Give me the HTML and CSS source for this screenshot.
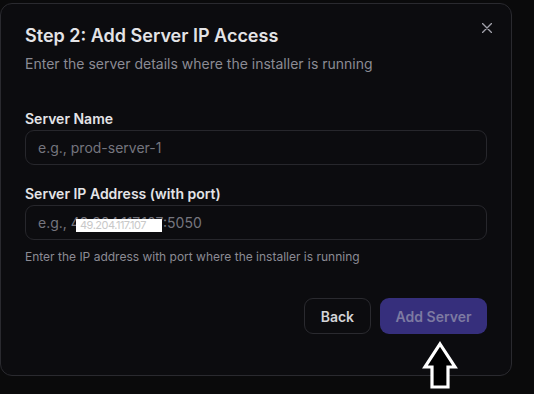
FILE: index.html
```html
<!DOCTYPE html>
<html lang="en">
<head>
  <meta charset="UTF-8" />
  <meta name="viewport" content="width=device-width, initial-scale=1.0" />
  <title>Add Server IP Access</title>
  <link rel="stylesheet" href="styles.css">
</head>
<body>

  <div class="dialog">
    <button class="close-btn" aria-label="Close">
      <svg width="10" height="10" viewBox="0 0 10 10" fill="none" stroke="currentColor" stroke-width="1.4" stroke-linecap="round">
        <path d="M0.5 0.5 9.5 9.5 M9.5 0.5 0.5 9.5" />
      </svg>
    </button>

    <h2>Step 2: Add Server IP Access</h2>
    <p class="subtitle">Enter the server details where the installer is running</p>

    <form class="server-form">
      <div class="field">
        <label for="serverName">Server Name</label>
        <input type="text" id="serverName" placeholder="e.g., prod-server-1" />
      </div>

      <div class="field">
        <label for="serverIp">Server IP Address (with port)</label>
        <div class="input-wrap">
          <input type="text" id="serverIp" placeholder="e.g., 49.204.117.107:5050" />
          <span class="redacted">49.204.117.107</span>
        </div>
        <p class="hint">Enter the IP address with port where the installer is running</p>
      </div>

      <div class="actions">
        <button type="button" class="btn btn-outline">Back</button>
        <button type="submit" class="btn btn-primary" disabled>Add Server</button>
      </div>
    </form>
  </div>

  <svg class="pointer-arrow" width="36" height="50" viewBox="0 0 36 50">
    <polygon points="18,3 33,26 26,26 26,46 10,46 10,26 3,26" fill="#000" stroke="#fff" stroke-width="3.2" stroke-linejoin="miter" />
  </svg>

</body>
</html>
```

FILE: styles.css
```css
* {
  box-sizing: border-box;
  margin: 0;
  padding: 0;
  font-family: Inter, 'Liberation Sans', Arial, sans-serif;
}

body {
  width: 534px;
  height: 394px;
  background: #0a0a0b;
  position: relative;
  overflow: hidden;
}

.dialog {
  position: relative;
  margin-top: 3px;
  width: 512px;
  background: #0c0c0f;
  border: 1px solid #2a2a2f;
  border-radius: 12px;
  padding: 18px 24px 41px 24px;
}

.close-btn {
  position: absolute;
  top: 19px;
  right: 19px;
  background: none;
  border: none;
  color: #a1a1aa;
  display: flex;
  cursor: pointer;
}

h2 {
  font-size: 18px;
  line-height: 28px;
  font-weight: 600;
  color: #e4e4e7;
}

.subtitle {
  margin-top: 4px;
  font-size: 14px;
  line-height: 20px;
  color: #8b8b94;
}

.server-form {
  margin-top: 35px;
}

.field + .field {
  margin-top: 19px;
}

label {
  display: block;
  font-size: 14px;
  line-height: 20px;
  font-weight: 600;
  color: #e4e4e7;
  margin-bottom: 1px;
}

.input-wrap {
  position: relative;
}

input[type="text"] {
  display: block;
  width: 100%;
  height: 35px;
  padding: 0 12px;
  border: 1px solid #27272c;
  border-radius: 9px;
  background: #0c0c0f;
  color: #e4e4e7;
  font-size: 14px;
  outline: none;
}

input::placeholder {
  color: #75757e;
}

.redacted {
  position: absolute;
  top: 14px;
  left: 51px;
  width: 86px;
  height: 13px;
  background: #fff;
  color: #c8c8c8;
  font-size: 11px;
  line-height: 13px;
  letter-spacing: -0.5px;
  overflow: hidden;
  white-space: nowrap;
  padding-left: 4px;
}

.hint {
  margin-top: 9px;
  font-size: 12px;
  line-height: 16px;
  color: #8b8b94;
}

.actions {
  margin-top: 33px;
  display: flex;
  justify-content: flex-end;
  gap: 9px;
}

.btn {
  height: 36px;
  padding: 0 16px;
  border-radius: 9px;
  font-size: 14px;
  font-weight: 600;
  white-space: nowrap;
  cursor: pointer;
}

.btn-outline {
  background: #0c0c0f;
  border: 1px solid #2a2a2f;
  color: #d4d4d8;
}

.btn-primary {
  padding: 0 15.5px;
  background: #362f7c;
  border: none;
  color: #7d7aa2;
}

.pointer-arrow {
  position: absolute;
  left: 422px;
  top: 341px;
}
```
